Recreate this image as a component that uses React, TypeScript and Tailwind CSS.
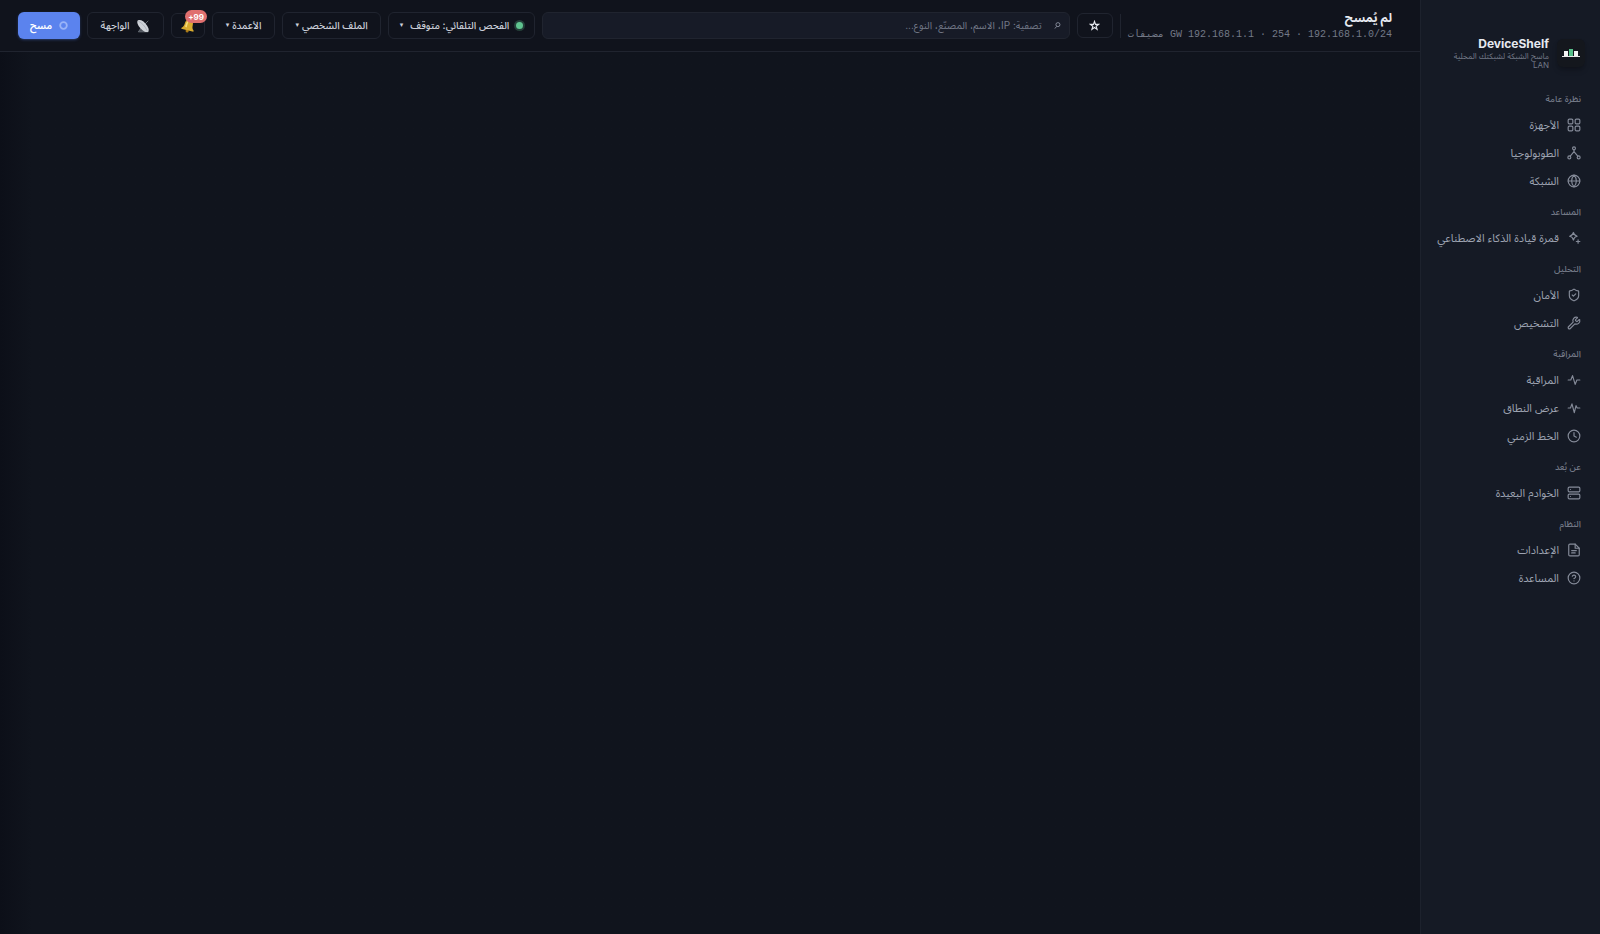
import React from 'react';
import { CircleHelp, Clock, Globe, Server, ShieldCheck, Wrench } from 'lucide-react';

interface NavItem {
  label: string;
  icon: React.ReactNode;
}

interface NavGroup {
  title: string;
  items: NavItem[];
}

const LineIcon = ({ children }: { children: React.ReactNode }) => (
  <svg width="14" height="14" viewBox="0 0 24 24" fill="none" stroke="currentColor" strokeWidth="2" strokeLinecap="round" strokeLinejoin="round">
    {children}
  </svg>
);

const GridIcon = () => (
  <LineIcon>
    <rect x="2" y="2" width="8" height="8" rx="2" />
    <rect x="14" y="2" width="8" height="8" rx="2" />
    <rect x="2" y="14" width="8" height="8" rx="2" />
    <rect x="14" y="14" width="8" height="8" rx="2" />
  </LineIcon>
);

const TopologyIcon = () => (
  <LineIcon>
    <circle cx="12" cy="4" r="2.5" />
    <circle cx="4" cy="19.5" r="2.5" />
    <circle cx="20" cy="19.5" r="2.5" />
    <path d="M12 6.500v3L5.500 17.500M12 9.500l6.500 8" />
  </LineIcon>
);

const SparklesIcon = () => (
  <LineIcon>
    <path d="M11 2.500c.8 4.200 2.300 5.700 6.500 6.500-4.200.8-5.700 2.300-6.500 6.500C10.200 11.300 8.700 9.800 4.500 9c4.200-.8 5.700-2.300 6.500-6.500z" />
    <path d="M19 15v6M16 18h6" />
  </LineIcon>
);

const PulseIcon = () => (
  <LineIcon>
    <path d="M2 12h4.500l3-7.500 4.500 15 3-7.500h5" />
  </LineIcon>
);

const BandwidthIcon = () => (
  <LineIcon>
    <path d="M2 12h4l2.500-7 4 15 3-12 2 4H22" />
  </LineIcon>
);

const FileIcon = () => (
  <LineIcon>
    <path d="M14 2H5a2 2 0 0 0-2 2v16a2 2 0 0 0 2 2h14a2 2 0 0 0 2-2V9z" />
    <path d="M14 2v7h7M8 13h8M8 17h6" />
  </LineIcon>
);

const groups: NavGroup[] = [
  {
    title: 'نظرة عامة',
    items: [
      { label: 'الأجهزة', icon: <GridIcon /> },
      { label: 'الطوبولوجيا', icon: <TopologyIcon /> },
      { label: 'الشبكة', icon: <Globe size={14} /> },
    ],
  },
  {
    title: 'المساعد',
    items: [{ label: 'قمرة قيادة الذكاء الاصطناعي', icon: <SparklesIcon /> }],
  },
  {
    title: 'التحليل',
    items: [
      { label: 'الأمان', icon: <ShieldCheck size={14} /> },
      { label: 'التشخيص', icon: <Wrench size={14} /> },
    ],
  },
  {
    title: 'المراقبة',
    items: [
      { label: 'المراقبة', icon: <PulseIcon /> },
      { label: 'عرض النطاق', icon: <BandwidthIcon /> },
      { label: 'الخط الزمني', icon: <Clock size={14} /> },
    ],
  },
  {
    title: 'عن بُعد',
    items: [{ label: 'الخوادم البعيدة', icon: <Server size={14} /> }],
  },
  {
    title: 'النظام',
    items: [
      { label: 'الإعدادات', icon: <FileIcon /> },
      { label: 'المساعدة', icon: <CircleHelp size={14} /> },
    ],
  },
];

const Logo = () => (
  <span className="flex size-7 shrink-0 items-center justify-center rounded-md bg-[#14171d] shadow-md shadow-black/20">
    <svg width="18" height="10" viewBox="0 0 18 10">
      <path d="M2 3h4v5H2zM12 3h4v5h-4z" fill="#f4f4f4" />
      <path d="M7 1h4v7H7z" fill="#57c08a" />
      <path d="M0 8h18v1H0z" fill="#e6e6e6" />
    </svg>
  </span>
);

const BellIcon = () => (
  <svg width="15" height="15" viewBox="0 0 24 24">
    <g transform="rotate(14 12 12)">
      <circle cx="12" cy="21" r="2.5" fill="#a87817" />
      <path d="M12 2c-4.500 0-6.500 3.500-6.500 8 0 4-1 6-3.500 8v2h20v-2c-2.500-2-3.500-4-3.500-8 0-4.500-2-8-6.500-8z" fill="#d9ab2f" />
      <path d="M9 5c-1.500 2-1.500 6-2 10l3 1c0-4 0-8 1-11z" fill="#f6dc7c" />
    </g>
  </svg>
);

const DishIcon = () => (
  <svg width="14" height="14" viewBox="0 0 24 24">
    <path d="M4 22 12 11l9 11zM13 11l8-8" fill="#4b5058" stroke="#6d737c" strokeWidth="1.5" />
    <ellipse cx="12" cy="12" rx="13" ry="6" transform="rotate(48 12 12)" fill="#ced2d8" />
    <path d="M4 4c6 2 12 9 15 16" stroke="#9aa0a8" strokeWidth="1" fill="none" />
  </svg>
);

const buttonClass =
  'flex h-[27px] shrink-0 items-center justify-center rounded-md border border-[#20242f] bg-[#10131c] text-[10px] font-medium text-[#ccd0da]';

export default function App() {
  return (
    <div
      dir="rtl"
      className="flex min-h-screen bg-[#10141d] font-['Inter','Noto_Sans_Arabic','DejaVu_Sans',sans-serif] text-[#ccd0da]"
    >
      {/* Sidebar */}
      <aside className="w-[180px] shrink-0 border-l border-[#1d222d] bg-[#151a25] pt-9">
        <div className="flex items-center gap-2 pr-[15px] pl-6">
          <Logo />
          <div>
            <h1 className="text-xs leading-4 font-bold text-[#e6e9f0]">DeviceShelf</h1>
            <p className="text-[8px] leading-[9px] text-[#737987]">ماسح الشبكة لشبكتك المحلية LAN</p>
          </div>
        </div>

        <nav className="pt-3">
          {groups.map((group) => (
            <section key={group.title}>
              <h2 className="pt-[11px] pr-[19px] pb-[6px] text-[9px] leading-3 font-medium text-[#737987]">{group.title}</h2>
              {group.items.map((item) => (
                <a key={item.label} href="#" className="flex h-7 items-center gap-2 pr-[19px] text-[11px] text-[#9da3b1]">
                  <span className="shrink-0 text-[#858b99]">{item.icon}</span>
                  {item.label}
                </a>
              ))}
            </section>
          ))}
        </nav>
      </aside>

      <div className="flex min-w-0 flex-1 flex-col">
        {/* Toolbar */}
        <header className="flex h-[52px] items-center gap-[7px] border-b border-[#20242f] bg-[#10131c] pr-7 pl-[18px]">
          <div className="shrink-0 pt-[2px]">
            <h2 className="text-xs leading-4 font-bold text-[#e6e9f0]">لم يُمسح</h2>
            <p className="font-['Liberation_Mono','DejaVu_Sans_Mono',monospace] text-[10px] leading-[18px] whitespace-pre text-[#737987]">
              <bdi>192.168.1.0/24</bdi> · 254 · <bdi>GW 192.168.1.1</bdi> مضيفات
            </p>
          </div>
          <span className="h-6 w-px bg-[#20242f]" />
          <button aria-label="المفضلة" className="flex h-[25px] w-9 shrink-0 items-center justify-center rounded-md border border-[#20242f] text-[#e6e9f0]">
            <svg width="11" height="11" viewBox="0 0 24 24" fill="none" stroke="currentColor" strokeWidth="2.5" strokeLinejoin="miter">
              <path d="m12 3 2.200 6.500H21l-5.400 4.200 2 6.800-5.600-4-5.600 4 2-6.800L3 9.500h6.800z" />
            </svg>
          </button>
          <label className="flex h-[27px] min-w-0 flex-1 items-center gap-3 rounded-md border border-[#20242f] bg-[#171b27] px-2">
            <svg width="7" height="7" viewBox="0 0 8 8" fill="none" stroke="#8f95a3" className="shrink-0">
              <circle cx="4.5" cy="3" r="2.3" />
              <path d="M3 5 1 7.500" />
            </svg>
            <input
              type="text"
              aria-label="تصفية"
              placeholder="تصفية: IP، الاسم، المصنّع، النوع..."
              className="min-w-0 flex-1 bg-transparent text-[10px] text-[#ccd0da] outline-none placeholder:text-[#737987]"
            />
          </label>
          <button className={`${buttonClass} w-[147px] gap-[7px]`}>
            <span className="size-[7px] rounded-full bg-[#5fc48f] ring-2 ring-[#5fc48f]/25" />
            <span>الفحص التلقائي: متوقف</span>
            <span className="text-[7px]">▾</span>
          </button>
          <button className={`${buttonClass} w-[99px] gap-[3px]`}>
            الملف الشخصي
            <span className="text-[7px]">▾</span>
          </button>
          <button className={`${buttonClass} w-[63px] gap-[3px]`}>
            الأعمدة
            <span className="text-[7px]">▾</span>
          </button>
          <button aria-label="الإشعارات" className="relative flex h-[25px] w-[34px] shrink-0 items-center justify-center rounded-md border border-[#20242f]">
            <BellIcon />
            <span dir="ltr" className="absolute -top-1 -right-[3px] flex h-[13px] items-center rounded-full bg-[#e0706f] px-[3px] text-[8px] font-bold text-white">
              +99
            </span>
          </button>
          <button className={`${buttonClass} w-[77px] gap-[7px]`}>
            <DishIcon />
            الواجهة
          </button>
          <button className="flex h-[27px] w-[62px] shrink-0 items-center justify-center gap-[7px] rounded-md bg-[#5b83ee] text-[10px] font-semibold text-white shadow-sm shadow-[#5b83ee]/30">
            <svg width="9" height="9" viewBox="0 0 10 10" fill="none" stroke="#9ab4f8" strokeWidth="2">
              <circle cx="5" cy="5" r="3.7" />
            </svg>
            مسح
          </button>
        </header>

        <main className="flex-1 bg-linear-to-r from-[#0c0f18] to-[#10141d] to-[32px]" />
      </div>
    </div>
  );
}
